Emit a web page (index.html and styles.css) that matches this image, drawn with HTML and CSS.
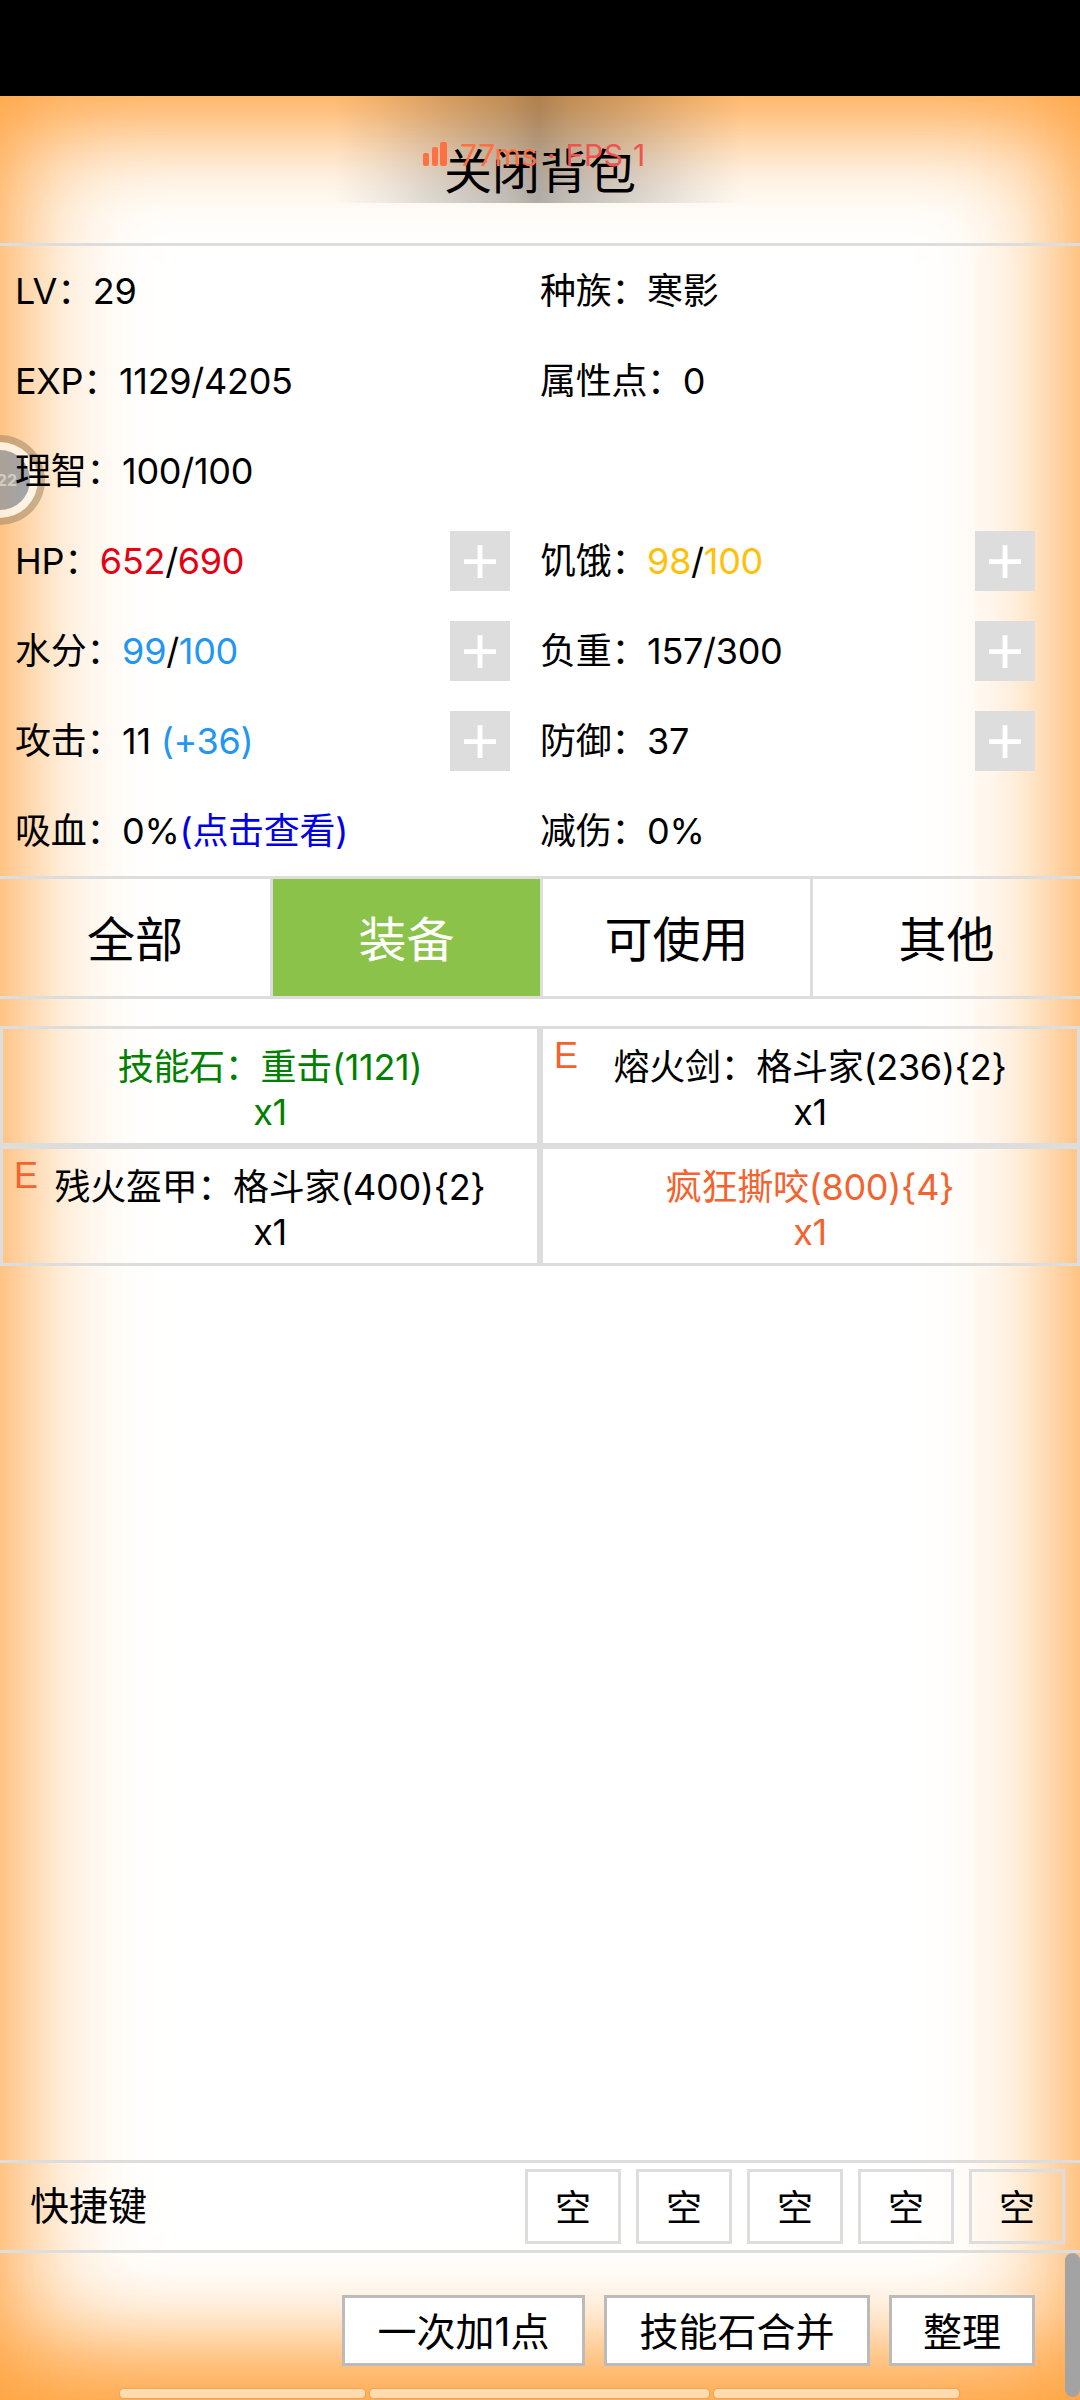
FILE: index.html
```html
<!DOCTYPE html>
<html lang="en">
<head>
    <meta charset="UTF-8">
    <meta name="viewport" content="width=device-width, initial-scale=1.0">
    <title>背包</title>
    <link rel="stylesheet" href="styles.css">
</head>
<body>
    <div class="status-bar"></div>
    <div class="page">
        <div class="header">关闭背包</div>

        <!-- floating ball sits under the stat text -->
        <div class="float-ball"><span>22</span></div>

        <div class="stats">
            <div class="stat"><span>LV：29</span></div>
            <div class="stat"><span>种族：寒影</span></div>
            <div class="stat"><span>EXP：1129/4205</span></div>
            <div class="stat"><span>属性点：0</span></div>
            <div class="stat"><span>理智：100/100</span></div>
            <div class="stat"></div>
            <div class="stat"><span>HP：<i class="red">652</i>/<i class="red">690</i></span><button class="plus">+</button></div>
            <div class="stat"><span>饥饿：<i class="yellow">98</i>/<i class="yellow">100</i></span><button class="plus">+</button></div>
            <div class="stat"><span>水分：<i class="sky">99</i>/<i class="sky">100</i></span><button class="plus">+</button></div>
            <div class="stat"><span>负重：157/300</span><button class="plus">+</button></div>
            <div class="stat"><span>攻击：11 <i class="sky">(+36)</i></span><button class="plus">+</button></div>
            <div class="stat"><span>防御：37</span><button class="plus">+</button></div>
            <div class="stat"><span>吸血：0%<i class="blue">(点击查看)</i></span></div>
            <div class="stat"><span>减伤：0%</span></div>
        </div>

        <div class="tabs">
            <div class="tab">全部</div>
            <div class="tab active">装备</div>
            <div class="tab">可使用</div>
            <div class="tab">其他</div>
        </div>

        <div class="items">
            <div class="item green">技能石：重击(1121)<br>x1</div>
            <div class="item"><span class="equip">E</span>熔火剑：格斗家(236){2}<br>x1</div>
            <div class="item"><span class="equip">E</span>残火盔甲：格斗家(400){2}<br>x1</div>
            <div class="item orange">疯狂撕咬(800){4}<br>x1</div>
        </div>

        <div class="quick-bar">
            <div class="quick-label">快捷键</div>
            <div class="slots">
                <div class="slot">空</div>
                <div class="slot">空</div>
                <div class="slot">空</div>
                <div class="slot">空</div>
                <div class="slot">空</div>
            </div>
        </div>

        <div class="actions">
            <button class="action add">一次加1点</button>
            <button class="action merge">技能石合并</button>
            <button class="action sort">整理</button>
        </div>

        <!-- things that float over the page -->
        <div class="notch-shade"></div>
        <div class="net-stat">
            <svg class="net-bars" width="24" height="24" viewBox="0 0 24 24">
                <rect x="0" y="11" width="6" height="13" rx="2" fill="#ff7043"/>
                <rect x="9" y="5" width="6" height="19" rx="2" fill="#ff7043"/>
                <rect x="17" y="0" width="7" height="24" rx="2" fill="#ff7043"/>
            </svg>
            <span class="net-text"><i class="ping">77ms</i> · FPS 1</span>
        </div>
        <div class="scroll-thumb"></div>
        <div class="dock">
            <div class="dock-item first"></div>
            <div class="dock-item second"></div>
            <div class="dock-item third"></div>
        </div>
    </div>
</body>
</html>
```

FILE: styles.css
```css
* {
    box-sizing: border-box;
}
html, body {
    margin: 0;
    padding: 0;
}
body {
    width: 1080px;
    height: 2400px;
    overflow: hidden;
    background-color: #000;
    font-family: Inter, "Noto Sans CJK SC", sans-serif;
    font-size: 36px;
    color: #000;
}
i {
    font-style: normal;
}
.status-bar {
    height: 96px;
    background-color: #000;
}
.page {
    position: relative;
    height: 2304px;
    display: flex;
    flex-direction: column;
    background-color: #fff;
    box-shadow: inset 0 60px 90px -50px rgba(255,163,64,.8), inset 0 -95px 90px -50px rgba(255,163,64,.85), inset 0 0 130px 10px #ffa340;
}
.notch-shade {
    position: absolute;
    top: 0;
    left: 333px;
    width: 410px;
    height: 107px;
    background: linear-gradient(90deg, rgba(0,0,0,0), rgba(0,0,0,.06) 12%, rgba(0,0,0,.16) 28%, rgba(0,0,0,.24) 42%, rgba(0,0,0,.31) 50%, rgba(0,0,0,.24) 58%, rgba(0,0,0,.16) 72%, rgba(0,0,0,.06) 88%, rgba(0,0,0,0));
}
.net-stat {
    position: absolute;
    top: 41px;
    left: 423px;
    display: flex;
    align-items: flex-end;
    gap: 13px;
}
.net-text {
    margin-bottom: -7px;
    font-size: 30px;
    line-height: 36px;
    letter-spacing: .7px;
    white-space: nowrap;
    color: #ef5350;
}
.ping {
    color: #ff7043;
}
.float-ball {
    position: absolute;
    top: 339px;
    left: -45px;
    width: 90px;
    height: 90px;
    border-radius: 50%;
    border: 7px solid rgba(160,135,100,.55);
    background-color: rgba(255,255,255,.7);
    background-clip: padding-box;
    display: flex;
    align-items: center;
    justify-content: flex-end;
    padding-right: 21px;
}
.float-ball::before {
    content: "";
    position: absolute;
    inset: 8px;
    border-radius: 50%;
    background: linear-gradient(90deg, #ab8f70, #8f98a3);
    opacity: .85;
}
.float-ball span {
    position: relative;
    font-size: 16px;
    font-weight: bold;
    color: rgba(230,225,210,.7);
}
.header {
    height: 150px;
    border-bottom: 3px solid #ddd;
    padding-top: 47px;
    text-align: center;
    font-size: 48px;
    line-height: 58px;
}
.stats {
    position: relative;
    display: grid;
    grid-template-columns: 525px 525px;
    grid-auto-rows: 90px;
    padding-left: 15px;
    letter-spacing: -.3px;
}
.stat {
    display: flex;
    align-items: center;
    justify-content: space-between;
    padding-right: 30px;
}
.stat span {
    margin-top: -6px;
}
.plus {
    width: 60px;
    height: 60px;
    padding: 0;
    border: none;
    background-color: #ddd;
    color: #fff;
    font-family: "Liberation Sans", sans-serif;
    font-size: 66px;
    line-height: 60px;
}
.red { color: #e60012; }
.yellow { color: #ffc107; }
.sky { color: #2196f3; }
.blue { color: #0000e6; }
.tabs {
    display: flex;
    height: 123px;
    border-top: 3px solid #ddd;
    border-bottom: 3px solid #ddd;
}
.tab {
    flex: none;
    width: 270px;
    padding-bottom: 4px;
    display: flex;
    align-items: center;
    justify-content: center;
    border-left: 3px solid #ddd;
    font-size: 48px;
}
.tab:first-child {
    border-left: none;
}
.tab.active {
    background-color: #8bc34a;
    color: #fff;
}
.items {
    display: grid;
    grid-template-columns: 540px 540px;
    grid-auto-rows: 120px;
    margin-top: 27px;
    letter-spacing: -.3px;
}
.item {
    position: relative;
    border: 3px solid #ddd;
    padding-top: 16px;
    text-align: center;
    line-height: 45px;
}
.green { color: #008000; }
.orange { color: #f4622e; }
.equip {
    position: absolute;
    top: 4px;
    left: 11px;
    color: #f4622e;
    font-family: "Liberation Sans", sans-serif;
}
.quick-bar {
    display: flex;
    align-items: center;
    justify-content: space-between;
    height: 93px;
    margin-top: auto;
    border-top: 3px solid #ddd;
    border-bottom: 3px solid #ddd;
    padding: 0 15px 0 30px;
}
.quick-label {
    margin-top: -8px;
    font-size: 39px;
}
.slots {
    display: flex;
    gap: 15px;
}
.slot {
    width: 96px;
    height: 75px;
    border: 3px solid #ddd;
    padding-top: 14px;
    text-align: center;
    line-height: 45px;
}
.actions {
    display: flex;
    justify-content: flex-end;
    gap: 19px;
    height: 147px;
    padding: 42px 45px 0 0;
}
.action {
    height: 71px;
    padding: 0 0 4px;
    border: 3px solid #bbb;
    background-color: #fff;
    color: #000;
    font-family: inherit;
    font-size: 39px;
}
.action.add { width: 243px; }
.action.merge { width: 266px; }
.action.sort { width: 146px; }
.scroll-thumb {
    position: absolute;
    right: 0;
    bottom: 3px;
    width: 15px;
    height: 144px;
    border-radius: 8px;
    background-color: #a3a3a3;
}
.dock {
    position: absolute;
    left: 120px;
    bottom: 2px;
    display: flex;
    gap: 5px;
}
.dock-item {
    height: 9px;
    border-radius: 4px;
    background-color: #ffdcaf;
    box-shadow: 0 0 2px rgba(170,110,40,.5);
}
.dock-item.first { width: 245px; }
.dock-item.second { width: 339px; }
.dock-item.third { width: 245px; }
```
